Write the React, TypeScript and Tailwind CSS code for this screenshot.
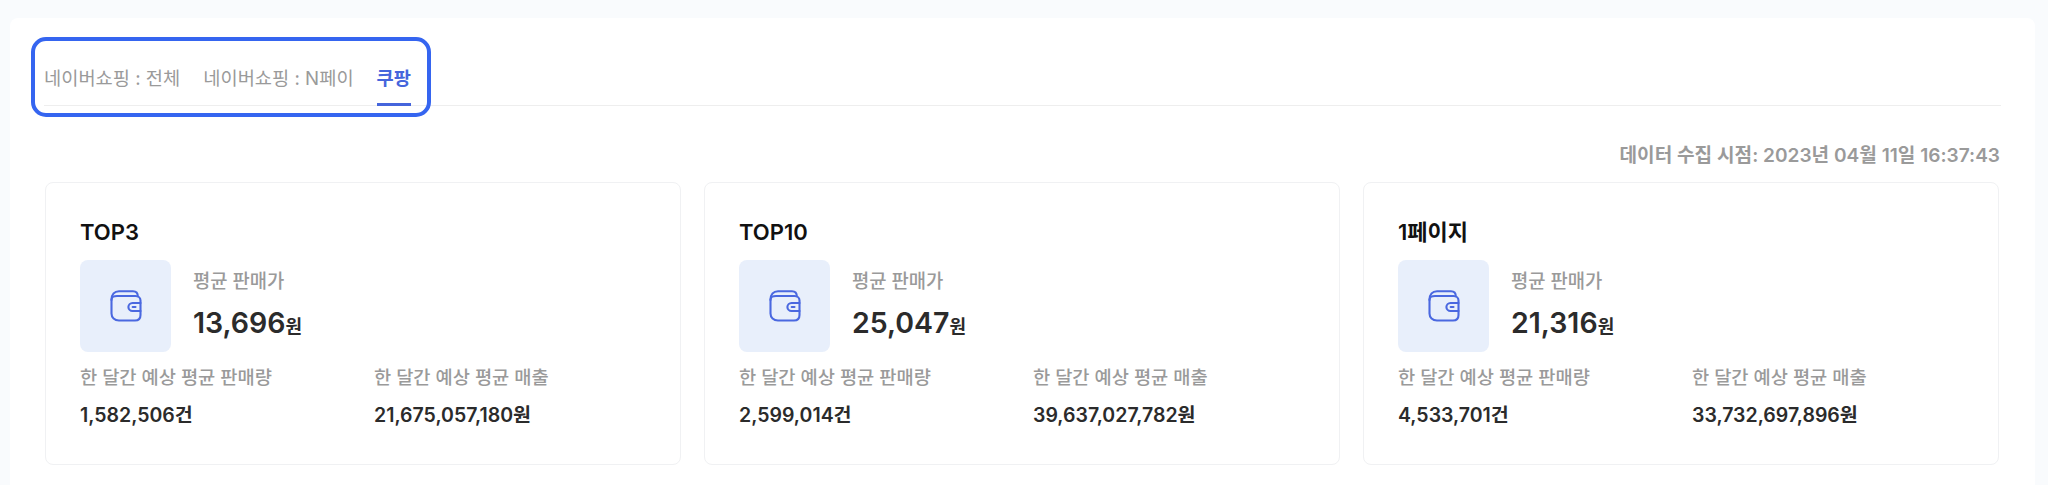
const font = { fontFamily: '"Inter","Noto Sans CJK KR",sans-serif' };

function Wallet() {
  return (
    <svg width="32" height="32" viewBox="0 0 32 32" fill="none" stroke="#4a68e0" strokeWidth="2.1" strokeLinecap="round" strokeLinejoin="round">
      <path d="M1.5 10C1.5 4.5 4.5 1.2 9 1.2H23C26 1.2 27.8 3.2 27.8 6.2" />
      <path d="M1.5 9.5C1.5 7 4 6 7 6H25.5C28.2 6 30.5 8 30.5 10.5V25C30.5 28.2 28.5 30.5 25 30.5H9C4.5 30.5 1.5 27.5 1.5 23.5V9.5Z" />
      <path d="M30.5 13H22.5C20.3 13 18.4 14.9 18.4 17C18.4 19.1 20.3 21 22.5 21H30.5" />
      <path d="M22.7 17H25.5" />
    </svg>
  );
}

const cards = [
  { title: "TOP3", price: "13,696", qty: "1,582,506건", sales: "21,675,057,180원" },
  { title: "TOP10", price: "25,047", qty: "2,599,014건", sales: "39,637,027,782원" },
  { title: "1페이지", price: "21,316", qty: "4,533,701건", sales: "33,732,697,896원" },
];

function Card({ title, price, qty, sales }: { title: string; price: string; qty: string; sales: string }) {
  return (
    <div className="h-[283px] w-[636px] rounded-lg border border-[#f0f1f3] bg-white pl-[34px] pt-[36px]">
      <div className="text-[22px] font-semibold leading-[26px] text-[#111111]">{title}</div>
      <div className="mt-[15px] flex">
        <div className="flex h-[92px] w-[91px] items-center justify-center rounded-lg bg-[#e8effb]">
          <Wallet />
        </div>
        <div className="ml-[22px] pt-[10px]">
          <div className="text-[18.8px] font-medium leading-[24px] text-[#9a9a9a]">평균 판매가</div>
          <div className="mt-[11px] flex items-baseline leading-[36px] text-[#2b2b2b]">
            <span className="text-[28.5px] font-semibold">{price}</span>
            <span className="text-[18px] font-semibold">원</span>
          </div>
        </div>
      </div>
      <div className="mt-[14px] flex">
        <div className="w-[294px]">
          <div className="text-[18.7px] font-medium leading-[24px] text-[#9a9a9a]">한 달간 예상 평균 판매량</div>
          <div className="mt-[13px] text-[19.5px] font-semibold leading-[24px] text-[#2b2b2b]">{qty}</div>
        </div>
        <div>
          <div className="text-[18.7px] font-medium leading-[24px] text-[#9a9a9a]">한 달간 예상 평균 매출</div>
          <div className="mt-[13px] text-[19.5px] font-semibold leading-[24px] text-[#2b2b2b]">{sales}</div>
        </div>
      </div>
    </div>
  );
}

export default function App() {
  return (
    <div className="h-[485px] overflow-hidden bg-[#f9fbfd] pl-[10px] pr-[13px] pt-[18px]" style={font}>
      <div className="relative h-[500px] rounded-lg bg-white px-[34px] pt-[44px]">
        <div className="flex h-[44px] gap-[23px] border-b border-[#eeeeee] text-[18.7px] leading-[34px] text-[#9a9a9a]">
          <div>네이버쇼핑 : 전체</div>
          <div>네이버쇼핑 : N페이</div>
          <div className="h-[44px] border-b-[3px] border-[#4565dc] font-bold text-[#4565dc]">쿠팡</div>
        </div>
        <div className="absolute left-[21px] top-[19px] h-[80px] w-[400px] rounded-[15px] border-[4px] border-[#3565f0]" />
        <div className="mt-[37px] pr-[1px] text-right text-[19.1px] font-semibold leading-[24px] text-[#9a9a9a]">
          데이터 수집 시점: 2023년 04월 11일 16:37:43
        </div>
        <div className="ml-[1px] mt-[15px] flex gap-[23px]">
          {cards.map((c) => (
            <Card key={c.title} {...c} />
          ))}
        </div>
      </div>
    </div>
  );
}
